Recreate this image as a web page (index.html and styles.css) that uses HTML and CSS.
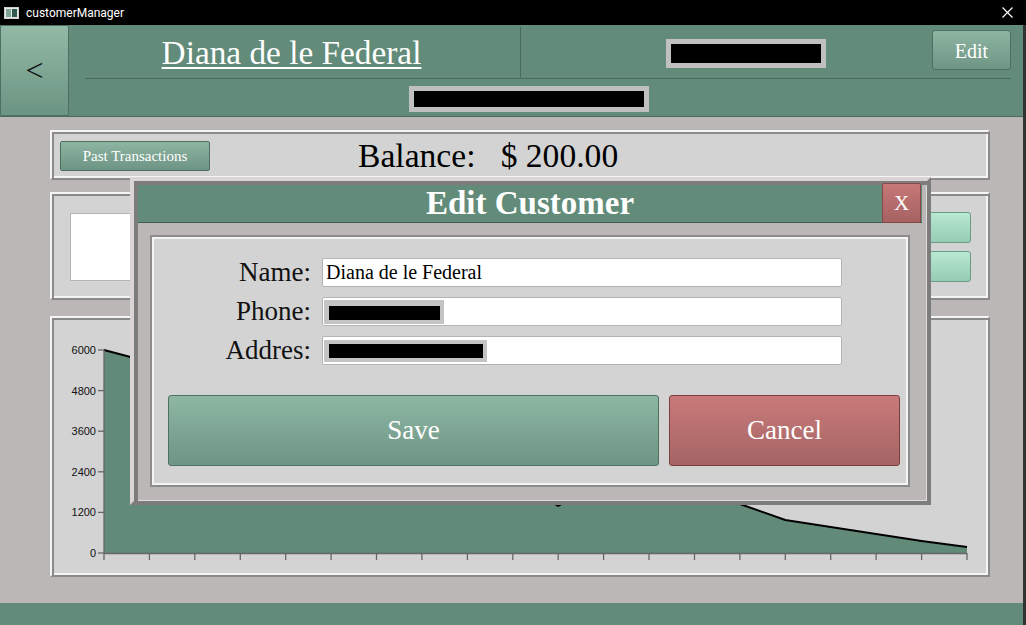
FILE: index.html
```html
<!DOCTYPE html>
<html lang="en">
<head>
<meta charset="utf-8">
<title>customerManager</title>
<link rel="stylesheet" href="styles.css">
</head>
<body>
<div class="titlebar">
  <svg class="app-icon" width="15" height="12" viewBox="0 0 15 12">
    <rect x="0.5" y="0.5" width="14" height="11" fill="#e8e8e8" stroke="#cfcfcf"/>
    <rect x="2" y="2" width="5" height="8" fill="#7fa597"/>
    <rect x="8" y="2" width="5" height="8" fill="#2f5a4e"/>
  </svg>
  <span class="app-name">customerManager</span>
  <svg class="win-close" width="11" height="11" viewBox="0 0 11 11">
    <path d="M0.5 0.5 L10.5 10.5 M10.5 0.5 L0.5 10.5" stroke="#fff" stroke-width="1.2"/>
  </svg>
</div>

<div class="app">
  <header class="header">
    <button class="back">&lt;</button>
    <div class="header-main">
      <div class="header-row1">
        <div class="title-area"><span class="cust-name">Diana de le Federal</span></div>
        <div class="header-right">
          <span class="redact redact-h1"></span>
          <button class="btn-edit">Edit</button>
        </div>
      </div>
      <div class="header-row2">
        <span class="redact redact-h2"></span>
      </div>
    </div>
  </header>

  <main class="content">
    <section class="panel balance-panel">
      <button class="btn-past">Past Transactions</button>
      <div class="balance">Balance:   $ 200.00</div>
    </section>

    <section class="panel info-panel">
      <div class="white-box"></div>
      <div class="mint-stack">
        <button class="mint"></button>
        <button class="mint"></button>
      </div>
    </section>

    <section class="panel chart-panel">
      <svg class="chart" width="936" height="257" viewBox="52 318 936 257">
        <polygon fill="#618a78" points="104,350 149.4,362 194.8,380 240.3,395 285.7,410 331.1,420 376.5,435 421.9,445 467.4,460 512.8,480 558.2,506 603.6,480 649,470 694.5,485 739.9,504 785.3,520 830.7,527 876.1,534 921.6,541 967,547 967,553 104,553"/>
        <polyline fill="none" stroke="#000" stroke-width="2" stroke-linejoin="round" points="104,350 149.4,362 194.8,380 240.3,395 285.7,410 331.1,420 376.5,435 421.9,445 467.4,460 512.8,480 558.2,506 603.6,480 649,470 694.5,485 739.9,504 785.3,520 830.7,527 876.1,534 921.6,541 967,547"/>
        <g stroke="#666" stroke-width="1.3">
          <line x1="104" y1="350" x2="104" y2="553"/>
          <line x1="104" y1="553.5" x2="967" y2="553.5"/>
          <line x1="98" y1="350" x2="104" y2="350"/>
          <line x1="98" y1="390.6" x2="104" y2="390.6"/>
          <line x1="98" y1="431.2" x2="104" y2="431.2"/>
          <line x1="98" y1="471.8" x2="104" y2="471.8"/>
          <line x1="98" y1="512.4" x2="104" y2="512.4"/>
          <line x1="98" y1="553" x2="104" y2="553"/>
          <line x1="104" y1="553" x2="104" y2="560"/>
          <line x1="149.4" y1="553" x2="149.4" y2="560"/>
          <line x1="194.8" y1="553" x2="194.8" y2="560"/>
          <line x1="240.3" y1="553" x2="240.3" y2="560"/>
          <line x1="285.7" y1="553" x2="285.7" y2="560"/>
          <line x1="331.1" y1="553" x2="331.1" y2="560"/>
          <line x1="376.5" y1="553" x2="376.5" y2="560"/>
          <line x1="421.9" y1="553" x2="421.9" y2="560"/>
          <line x1="467.4" y1="553" x2="467.4" y2="560"/>
          <line x1="512.8" y1="553" x2="512.8" y2="560"/>
          <line x1="558.2" y1="553" x2="558.2" y2="560"/>
          <line x1="603.6" y1="553" x2="603.6" y2="560"/>
          <line x1="649" y1="553" x2="649" y2="560"/>
          <line x1="694.5" y1="553" x2="694.5" y2="560"/>
          <line x1="739.9" y1="553" x2="739.9" y2="560"/>
          <line x1="785.3" y1="553" x2="785.3" y2="560"/>
          <line x1="830.7" y1="553" x2="830.7" y2="560"/>
          <line x1="876.1" y1="553" x2="876.1" y2="560"/>
          <line x1="921.6" y1="553" x2="921.6" y2="560"/>
          <line x1="967" y1="553" x2="967" y2="560"/>
        </g>
        <g class="axis-labels" text-anchor="end">
          <text x="96" y="354">6000</text>
          <text x="96" y="394.6">4800</text>
          <text x="96" y="435.2">3600</text>
          <text x="96" y="475.8">2400</text>
          <text x="96" y="516.4">1200</text>
          <text x="96" y="557">0</text>
        </g>
      </svg>
    </section>
  </main>

  <footer class="footer"></footer>
</div>

<div class="dialog">
  <div class="dlg-header">
    <span class="dlg-title">Edit Customer</span>
    <button class="dlg-close">X</button>
  </div>
  <div class="dlg-body">
    <div class="form">
      <label class="label">Name:</label>
      <div class="input"><span class="input-text">Diana de le Federal</span></div>
      <label class="label">Phone:</label>
      <div class="input"><span class="redact-in redact-phone"></span></div>
      <label class="label">Addres:</label>
      <div class="input"><span class="redact-in redact-addr"></span></div>
    </div>
    <div class="btn-row">
      <button class="btn-save">Save</button>
      <button class="btn-cancel">Cancel</button>
    </div>
  </div>
</div>
</body>
</html>
```

FILE: styles.css
```css
* { box-sizing: border-box; margin: 0; padding: 0; }

html, body { width: 1026px; height: 625px; overflow: hidden; }

body {
  background: #000;
  font-family: "Liberation Serif", "Times New Roman", serif;
  position: relative;
}

button { font-family: "Liberation Serif", "Times New Roman", serif; cursor: pointer; }

/* window title bar */
.titlebar {
  height: 25px;
  background: #000;
  display: flex;
  align-items: center;
  color: #fff;
  font-family: Roboto, "Liberation Sans", sans-serif;
  font-size: 12px;
}
.app-icon { margin-left: 4px; flex-shrink: 0; }
.app-name { margin-left: 7px; }
.win-close { margin-left: auto; margin-right: 13px; }

.app {
  height: 600px;
  display: flex;
  flex-direction: column;
  border-right: 3px solid #333;
}

/* header */
.header {
  height: 92px;
  background: #628b79;
  border-bottom: 1px solid #4a6a5c;
  display: flex;
  flex-shrink: 0;
}
.back {
  width: 69px;
  height: 91px;
  flex-shrink: 0;
  border: 1px solid #4e6f61;
  border-radius: 2px;
  background: linear-gradient(#91b9a6, #6c9482);
  color: #111;
  font-size: 32px;
  display: flex;
  align-items: center;
  justify-content: center;
}
.header-main { flex: 1; display: flex; flex-direction: column; }
.header-row1 {
  height: 54px;
  margin: 0 16px;
  padding-top: 2px;
  border-bottom: 1px solid #4a6a5c;
  display: flex;
}
.title-area {
  width: 436px;
  flex-shrink: 0;
  border-right: 1px solid #4a6a5c;
  display: flex;
  align-items: center;
  justify-content: center;
  padding-right: 22px;
}
.cust-name {
  color: #fff;
  font-size: 33.3px;
  text-decoration: underline;
  text-decoration-thickness: 2px;
  text-underline-offset: 3px;
}
.header-right {
  flex: 1;
  display: flex;
  align-items: flex-start;
  padding-left: 145px;
}
.redact { display: block; background: #000; border: 5px solid #c0c0c0; flex-shrink: 0; }
.redact-h1 { margin-top: 12px; width: 160px; height: 29px; }
.btn-edit {
  flex-shrink: 0;
  margin-left: 106px;
  margin-top: 3px;
  width: 79px;
  height: 40px;
  border: 1px solid #4e6e60;
  border-radius: 3px;
  background: linear-gradient(#8db5a2, #6f9584);
  color: #fff;
  font-size: 20px;
  padding-top: 3px;
}
.header-row2 { padding: 7px 0 0 340px; }
.redact-h2 { width: 240px; height: 26px; }

/* content */
.content {
  flex: 1;
  background: #bbb7b7;
  display: flex;
  flex-direction: column;
  padding: 13px 0 0 50px;
  gap: 12px;
}
.panel {
  width: 940px;
  flex-shrink: 0;
  background: #d3d3d3;
  border: 2px solid;
  border-color: #f4f4f4 #8a8a8a #8a8a8a #f4f4f4;
  box-shadow: inset 2px 2px 0 #8a8a8a, inset -2px -2px 0 #f4f4f4;
}
.balance-panel {
  height: 50px;
  display: flex;
  align-items: center;
  padding: 2px 8px 0;
}
.btn-past {
  width: 150px;
  height: 30px;
  flex-shrink: 0;
  border: 1px solid #4e6d60;
  border-radius: 2px;
  background: linear-gradient(#8db5a2, #6e9483);
  color: #fff;
  font-size: 15px;
}
.balance {
  margin-left: 148px;
  font-size: 33.6px;
  white-space: pre;
  color: #000;
}

.info-panel {
  height: 108px;
  display: flex;
  align-items: flex-start;
  padding: 19px 17px 0 18px;
}
.white-box {
  width: 260px;
  height: 68px;
  background: #fff;
  border: 1px solid #b4b4b4;
}
.mint-stack {
  margin-left: auto;
  margin-top: -1px;
  display: flex;
  flex-direction: column;
  gap: 8px;
}
.mint {
  width: 110px;
  height: 31px;
  border: 1px solid #6b9a86;
  border-radius: 3px;
  background: linear-gradient(#b8e9d2, #97cbb3);
}

.chart-panel { height: 261px; margin-top: 4px; }
.chart { display: block; }
.axis-labels text {
  font-family: "Liberation Sans", Arial, sans-serif;
  font-size: 11px;
  fill: #111;
}

.footer { height: 22px; background: #628b79; flex-shrink: 0; }

/* dialog */
.dialog {
  position: absolute;
  left: 130px;
  top: 177px;
  width: 801px;
  height: 328px;
  background: #bbb7b7;
  border: 4px solid;
  border-color: #dad4d4 #7c7c7c #7c7c7c #dad4d4;
  box-shadow: inset 4px 4px 0 #7c7c7c, inset -1px -1px 0 #e2dcdc;
  padding: 4px 5px 4px 4px;
  display: flex;
  flex-direction: column;
}
.dlg-header {
  height: 38px;
  flex-shrink: 0;
  background: #628b79;
  border-bottom: 1px solid #3f5e51;
  position: relative;
  display: flex;
  align-items: center;
  justify-content: center;
}
.dlg-title { color: #fff; font-weight: bold; font-size: 33px; }
.dlg-close {
  position: absolute;
  right: 1px;
  top: -2px;
  width: 39px;
  height: 40px;
  border: 1px solid #8a4848;
  border-radius: 2px;
  background: linear-gradient(#c77777, #a56262);
  color: #fff;
  font-size: 21px;
}
.dlg-body {
  margin: 12px 12px 0;
  height: 252px;
  flex-shrink: 0;
  background: #d3d3d3;
  border: 2px solid #8c8c8c;
  box-shadow: inset 0 0 0 2px #f4f4f4;
  padding: 21px 4px 0 2px;
}
.form {
  display: grid;
  grid-template-columns: 157px 520px;
  column-gap: 11px;
  row-gap: 10px;
}
.label {
  text-align: right;
  font-size: 27px;
  line-height: 29px;
  color: #111;
}
.input {
  height: 29px;
  background: #fff;
  border: 1px solid #b4b4b4;
  border-radius: 2px;
  display: flex;
  align-items: center;
  padding-left: 3px;
}
.input-text { font-size: 20px; color: #000; }
.redact-in { display: block; background: #000; border-style: solid; border-color: #c4c4c4; margin-left: -2px; }
.redact-phone { width: 120px; height: 24px; border-width: 6px 4px 4px 5px; }
.redact-addr { width: 163px; height: 22px; border-width: 4px 4px 4px 5px; }

.btn-row { display: flex; gap: 10px; margin: 30px 0 0 14px; }
.btn-save {
  width: 491px;
  height: 71px;
  border: 1px solid #4e7162;
  border-radius: 3px;
  background: linear-gradient(#8db6a3, #6f9585);
  color: #fff;
  font-size: 27px;
}
.btn-cancel {
  width: 231px;
  height: 71px;
  border: 1px solid #7b3d3d;
  border-radius: 3px;
  background: linear-gradient(#c97a7a, #a56464);
  color: #fff;
  font-size: 27px;
}
```
